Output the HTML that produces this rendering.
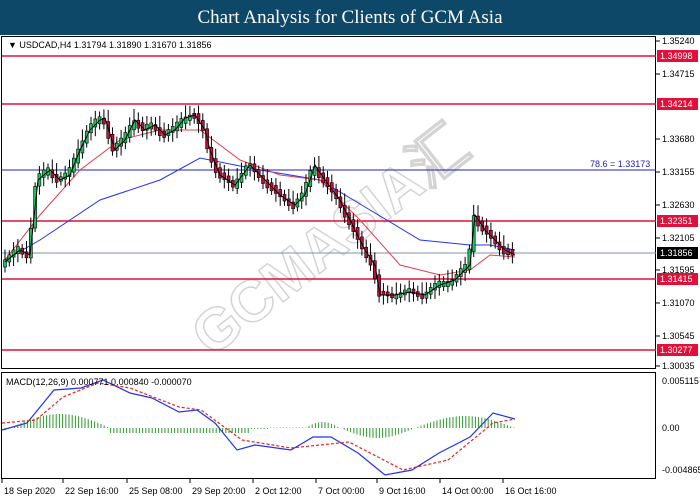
<!DOCTYPE html>
<html><head><meta charset="utf-8"><style>
body{margin:0;width:700px;height:500px;background:#fff;overflow:hidden;font-family:"Liberation Sans",sans-serif}
#t{position:absolute;left:0;top:0;width:700px;height:35px;background:#0e4868;color:#fff;font:19px "Liberation Serif",serif;text-align:center;line-height:35px}
svg{position:absolute;left:0;top:0}
</style></head><body>
<div id="t">Chart Analysis for Clients of GCM Asia</div>
<svg id="s" width="700" height="500" font-family="Liberation Sans, sans-serif" font-size="9">
<rect x="1.5" y="36.5" width="654" height="332" fill="none" stroke="#000"/>
<rect x="1.5" y="372.5" width="654" height="106" fill="none" stroke="#000"/>
<g transform="translate(330,240) rotate(-38)" font-size="58" font-weight="bold" fill="#fff" stroke="#d4d4d4" stroke-width="1.5" text-anchor="middle"><text x="0" y="20">GCMASIA汇</text></g>
<g stroke="#e0103a" stroke-width="1.5">
<line x1="2" y1="56" x2="656" y2="56"/><line x1="2" y1="104" x2="656" y2="104"/><line x1="2" y1="221" x2="656" y2="221"/><line x1="2" y1="279" x2="656" y2="279"/><line x1="2" y1="350" x2="656" y2="350"/></g>
<line x1="2" y1="170" x2="656" y2="170" stroke="#2020b0"/>
<line x1="2" y1="253" x2="656" y2="253" stroke="#8090a0"/>
<text x="590" y="167" fill="#2020b0">78.6  = 1.33173</text>
<polyline fill="none" stroke="#2233ee" points="5,260 40,240 100,200 160,180 200,158 260,170 320,180 370,210 420,240 470,245 490,245 515,250"/>
<polyline fill="none" stroke="#e04050" points="5,260 40,215 80,170 120,140 160,130 200,130 240,160 280,175 320,180 360,220 400,265 440,275 470,270 490,255 515,257"/>
<g id="c"></g>
<polyline fill="none" stroke="#000" points="5,262 20,250 30,255 38,180 50,170 60,180 70,175 80,150 90,130 100,120 105,118 115,150 125,140 135,120 145,130 155,125 165,135 175,130 185,118 195,115 205,130 210,150 220,175 235,185 250,165 260,175 270,185 280,195 295,205 305,195 315,165 325,180 340,200 355,230 365,250 375,265 380,295 395,295 410,292 425,295 440,285 455,280 470,265 475,215 485,230 495,240 505,250 515,255"/>
<g id="h"></g>
<polyline fill="none" stroke="#2233ee" stroke-width="1.2" points="2,430 27,423 54,390 81,388 103,380 130,393 152,398 179,412 197,410 215,423 237,450 255,445 291,450 313,437 331,437 358,453 385,475 412,470 439,453 470,437 493,413 515,419"/>
<polyline fill="none" stroke="#ee2020" stroke-dasharray="3,2" stroke-width="1.2" points="2,423 36,420 63,397 98,383 130,388 179,407 201,410 242,440 291,448 349,442 403,470 448,460 493,423 515,419"/>
<text x="6" y="385" fill="#000">MACD(12,26,9) 0.000771 0.000840 -0.000070</text>
<g fill="#000"><text x="8" y="48">▼ USDCAD,H4  1.31794 1.31890 1.31670 1.31856</text></g>
<g id="ax" fill="#000"></g>
</svg>
<script>
var ns="http://www.w3.org/2000/svg",ax=document.getElementById('ax');
function el(t,a,p){var e=document.createElementNS(ns,t);for(var k in a)e.setAttribute(k,a[k]);(p||ax).appendChild(e);return e}
var labs=[["1.35240",41],["1.34715",74],["1.33680",139],["1.33155",172],["1.32630",205],["1.32105",238],["1.31595",270],["1.31070",303],["1.30545",336],["1.30035",366]];
labs.forEach(function(l){el('line',{x1:656,y1:l[1],x2:660,y2:l[1],stroke:'#000'});el('text',{x:662,y:l[1]+3}).textContent=l[0]});
[["1.34998",56,"#e0103a"],["1.34214",104,"#e0103a"],["1.32351",221,"#e0103a"],["1.31856",253,"#000"],["1.31415",279,"#e0103a"],["1.30277",350,"#e0103a"]].forEach(function(l){el('rect',{x:657,y:l[1]-6,width:41,height:12,fill:l[2]});var t=el('text',{x:660,y:l[1]+3,fill:'#fff'});t.textContent=l[0]});
[["0.005115",381],["0.00",428],["-0.004865",470]].forEach(function(l){el('text',{x:662,y:l[1]+3}).textContent=l[0]});
[["18 Sep 2020",2],["22 Sep 16:00",63],["25 Sep 08:00",127],["29 Sep 20:00",190],["2 Oct 12:00",253],["7 Oct 00:00",316],["9 Oct 16:00",377],["14 Oct 00:00",440],["16 Oct 16:00",503]].forEach(function(l){el('line',{x1:l[1],y1:479,x2:l[1],y2:483,stroke:'#000'});el('text',{x:l[1]+2,y:494}).textContent=l[0]});
var pts=[[5,262],[20,250],[30,255],[38,180],[50,170],[60,180],[70,175],[80,150],[90,130],[100,120],[105,118],[115,150],[125,140],[135,120],[145,130],[155,125],[165,135],[175,130],[185,118],[195,115],[205,130],[210,150],[220,175],[235,185],[250,165],[260,175],[270,185],[280,195],[295,205],[305,195],[315,165],[325,180],[340,200],[355,230],[365,250],[375,265],[380,295],[395,295],[410,292],[425,295],[440,285],[455,280],[470,265],[475,215],[485,230],[495,240],[505,250],[515,255]];
function py(x){for(var i=1;i<pts.length;i++)if(x<=pts[i][0]){var a=pts[i-1],b=pts[i];return a[1]+(b[1]-a[1])*(x-a[0])/(b[0]-a[0])}return 255}
var c=document.getElementById('c');
for(var x=5;x<=515;x+=4.3){var y0=py(x-2),y1=py(x+2),up=y1<y0,tp=Math.min(y0,y1)-2,bt=Math.max(y0,y1)+2,s=Math.sin(x*1.7)*6;
el('line',{x1:x,y1:tp-4-Math.abs(s),x2:x,y2:bt+4+Math.abs(s*0.6),stroke:'#000'},c);
el('rect',{x:x-1.5,y:tp+s*0.3,width:3,height:Math.max(3,bt-tp),fill:up?'#1fc060':'#c0103a',stroke:'#000','stroke-width':0.6},c)}
var h=document.getElementById('h');
function hv(x){if(x<110)return 14*Math.sin((x-10)/100*Math.PI);if(x<250)return -5;if(x<305)return x<270?-1:0.5;if(x<340)return 6*Math.sin((x-305)/35*Math.PI);if(x<415)return -10*Math.sin((x-340)/75*Math.PI);return 12*Math.sin((x-415)/100*Math.PI)}
for(var x=5;x<=515;x+=3.2){var v=hv(x);el('line',{x1:x,y1:428,x2:x,y2:428-v,stroke:'#2a9a2a'},h)}
</script>
</body></html>
